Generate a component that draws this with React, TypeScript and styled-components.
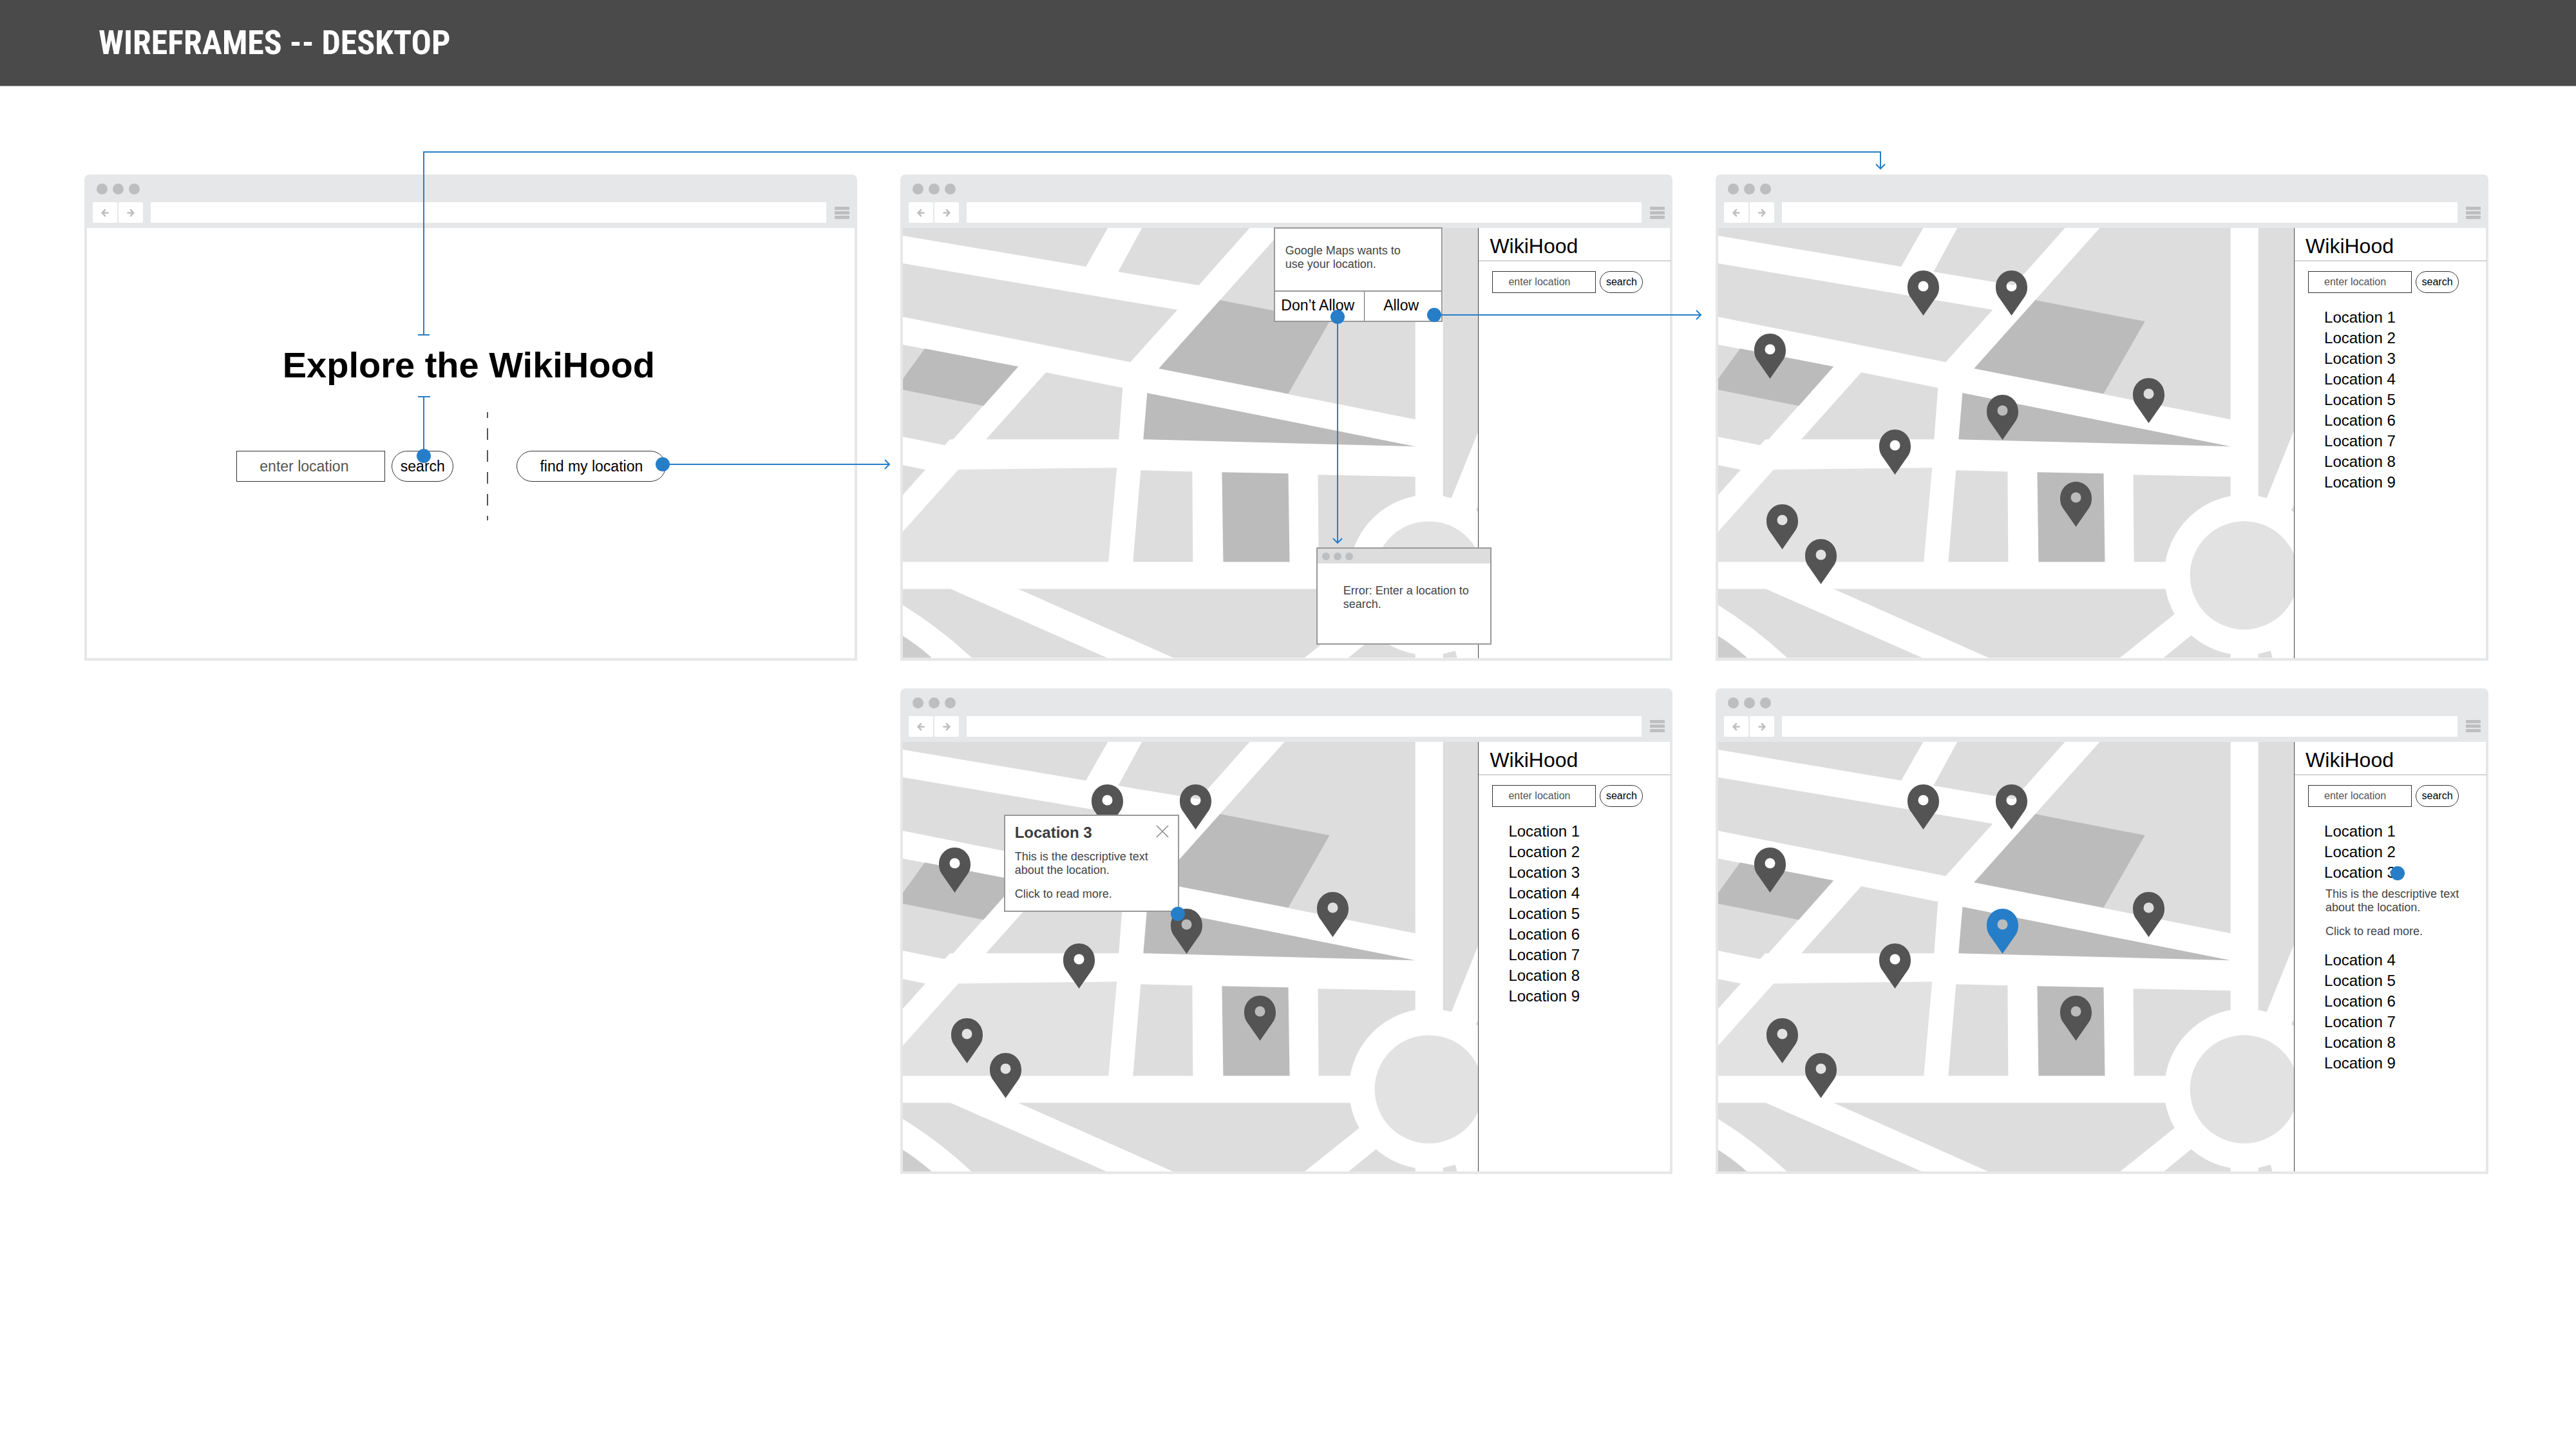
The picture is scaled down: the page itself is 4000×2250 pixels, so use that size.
import React from 'react';
import styled, { createGlobalStyle } from 'styled-components';

const BLUE = '#267ec8';
const CHROME = '#e6e7e8';
const SANS = '"Liberation Sans", Arial, Helvetica, sans-serif';

const GlobalStyle = createGlobalStyle`
  *, *::before, *::after { box-sizing: border-box; }
  body { margin: 0; background: #fff; font-family: ${SANS}; color: #000; }
  button, input { font-family: inherit; margin: 0; }
  h1, h2, h3, p, ul { margin: 0; padding: 0; }
  ul { list-style: none; }
  a { color: inherit; text-decoration: none; }
`;

/* ---------- page ---------- */

const Page = styled.div`
  position: relative;
  min-height: 100vh;
`;

const Header = styled.header`
  display: flex;
  align-items: center;
  height: 134px;
  padding: 0 153px;
  border-bottom: 1px solid #9a9a9a;
  background: #4a4a4a;
`;

const Title = styled.h1`
  color: #fff;
  font-family: "Liberation Sans Narrow", "Arial Narrow", "Roboto Condensed", ${SANS};
  font-size: 52px;
  line-height: 64px;
  font-weight: 700;
`;

const Board = styled.main`
  display: grid;
  grid-template-columns: repeat(3, minmax(0, 1fr));
  gap: 43px 67px;
  padding: 137px 136px 64px 131px;
`;

const Connectors = styled.svg`
  position: absolute;
  top: 0;
  left: 0;
  width: 100%;
  z-index: 5;
  pointer-events: none;
  fill: none;
  stroke: ${BLUE};
  stroke-width: 2;
`;

/* ---------- browser frame ---------- */

const Frame = styled.section<{ $column?: number }>`
  display: flex;
  flex-direction: column;
  grid-column: ${(p) => p.$column ?? 'auto'};
  border: 4px solid ${CHROME};
  border-top: 0;
  border-radius: 8px 8px 0 0;
  background: #fff;
`;

const Chrome = styled.div`
  display: flex;
  flex-direction: column;
  gap: 12px;
  padding: 14px 8px 8px 9px;
  border-radius: 4px 4px 0 0;
  background: ${CHROME};
`;

const Dots = styled.div<{ $size: number; $gap: number; $inset: number }>`
  display: flex;
  gap: ${(p) => p.$gap}px;
  padding-left: ${(p) => p.$inset}px;
  span {
    width: ${(p) => p.$size}px;
    height: ${(p) => p.$size}px;
    border-radius: 50%;
    background: #bcbec0;
  }
`;

const Toolbar = styled.div`
  display: flex;
  align-items: center;
`;

const NavGroup = styled.div`
  display: flex;
  gap: 2px;
  margin-right: 12px;
`;

const NavButton = styled.button`
  display: grid;
  place-items: center;
  width: 38px;
  height: 32px;
  padding: 0;
  border: 0;
  border-radius: 2px;
  background: #fff;
`;

const Address = styled.input`
  flex: 1;
  min-width: 0;
  height: 32px;
  padding: 0 12px;
  border: 0;
  border-radius: 1px;
  background: #fff;
  font-size: 18px;
`;

const MenuButton = styled.button`
  display: flex;
  flex-direction: column;
  gap: 2px;
  width: 23px;
  margin: 0 0 0 13px;
  padding: 0;
  border: 0;
  background: none;
  span {
    height: 5px;
    border-radius: 1px;
    background: #bcbec0;
  }
`;

const Body = styled.div`
  position: relative;
  flex: 1;
`;

const ArrowIcon = ({ d }: { d: string }) => (
  <svg width="14" height="14" viewBox="0 0 14 14" fill="none" stroke="#bcbec0" strokeWidth="2.6" strokeLinecap="round">
    <path d={d} />
  </svg>
);

const Browser = ({ column, children }: { column?: number; children: React.ReactNode }) => (
  <Frame $column={column}>
    <Chrome>
      <Dots $size={17} $gap={8} $inset={6}>
        <span /><span /><span />
      </Dots>
      <Toolbar>
        <NavGroup>
          <NavButton aria-label="Back">
            <ArrowIcon d="M11.500 7.500H3M7 2.800L2.700 7.500L7 12.200" />
          </NavButton>
          <NavButton aria-label="Forward">
            <ArrowIcon d="M2.500 7.500H11M7 2.800L11.300 7.500L7 12.200" />
          </NavButton>
        </NavGroup>
        <Address aria-label="Address" />
        <MenuButton aria-label="Menu">
          <span /><span /><span />
        </MenuButton>
      </Toolbar>
    </Chrome>
    <Body>{children}</Body>
  </Frame>
);

/* ---------- form controls ---------- */

const SearchForm = styled.form<{ $large?: boolean }>`
  display: flex;
  gap: ${(p) => (p.$large ? 10 : 6)}px;
`;

const Field = styled.input<{ $large?: boolean }>`
  width: ${(p) => (p.$large ? 231 : 161)}px;
  height: ${(p) => (p.$large ? 48 : 34)}px;
  padding: 0 0 0 ${(p) => (p.$large ? 35 : 24)}px;
  border: 1px solid #333;
  border-radius: 0;
  background: #fff;
  color: #555;
  font-size: ${(p) => (p.$large ? 23 : 16)}px;
  &::placeholder { color: #555; opacity: 1; }
`;

const Pill = styled.button<{ $large?: boolean; $width: number }>`
  width: ${(p) => p.$width}px;
  height: ${(p) => (p.$large ? 48 : 34)}px;
  padding: 0;
  border: 1px solid #333;
  border-radius: 24px;
  background: #fff;
  color: #000;
  font-size: ${(p) => (p.$large ? 23 : 16)}px;
  white-space: nowrap;
`;

const Search = ({ large }: { large?: boolean }) => (
  <SearchForm $large={large} onSubmit={(e) => e.preventDefault()}>
    <Field $large={large} placeholder="enter location" aria-label="Location" />
    <Pill $large={large} $width={large ? 96 : 67}>search</Pill>
  </SearchForm>
);

/* ---------- landing screen ---------- */

const Landing = styled.div`
  display: flex;
  flex-direction: column;
  align-items: center;
  gap: 41px;
  padding: 181px 6px 0 0;
`;

const Hero = styled.h2`
  font-size: 56px;
  line-height: 64px;
  font-weight: 700;
  white-space: nowrap;
`;

const Choices = styled.div`
  display: flex;
  align-items: center;
  padding-right: 54px;
`;

const Separator = styled.div`
  width: 2px;
  height: 168px;
  margin: 0 44px 0 52px;
  background: repeating-linear-gradient(#555 0 9px, transparent 9px 25px, #555 25px 34px);
`;

/* ---------- map ---------- */

const Split = styled.div`
  display: grid;
  grid-template-columns: 3fr 1fr;
  height: 100%;
`;

const MapArea = styled.div`
  position: relative;
  svg.map { display: block; width: 100%; height: 100%; }
`;

const PinButton = styled.button`
  position: absolute;
  width: 49px;
  height: 70px;
  margin-left: -25px;
  padding: 0;
  border: 0;
  background: none;
  svg { display: block; }
`;

const CityMap = () => (
  <svg className="map" viewBox="0 0 893 667" preserveAspectRatio="xMidYMid slice" fill="#ddd" aria-hidden="true">
    <path d="M0 0H318L284 60L0 12Z" />
    <path d="M371 0H538L459 89L334 68Z" />
    <path d="M592 0H795V297L397 218Z" />
    <path d="M0 55L426 127L353 208L0 138Z" />
    <path d="M0 181L179 215L78 328H73L65 337L0 324Z" />
    <path d="M222 224L341 248L335 328H129Z" />
    <path d="M838 0H893V315L851 419L838 416Z" />
    <path d="M0 368L35 375L0 414Z" />
    <path d="M369 376L449 378L450 518H357Z" />
    <path d="M644 383L795 386V416A125 125 0 0 0 694 518H645Z" />
    <path d="M179 560H694A125 125 0 0 0 708 599L623 667H420Z" />
    <path d="M0 560H74L317 667H107Q58 621 0 585Z" />
    <path d="M734 632A125 125 0 0 0 795 661V667H691Z" />
    <path d="M838 661L857 656L860 667H838Z" />
    <path d="M893 431L889 438L893 441Z" />
    <path fill="#cdcdcd" d="M0 633Q24 648 45 667H0Z" />
    <g fill="#e2e2e2">
      <path d="M86 375L332 372L319 518H0V471Z" />
      <circle cx="816" cy="539" r="84" />
    </g>
    <g fill="#bbb">
      <path d="M492 112L662 145L598 257L397 218Z" />
      <path d="M34 187L179 215L125 276L0 251V234Z" />
      <path d="M379 256L795 339L373 328Z" />
      <path d="M495 379L598 381L600 518H497Z" />
    </g>
  </svg>
);

const PINS = [
  { name: 'Location 1', x: 318, y: 66 },
  { name: 'Location 2', x: 455, y: 66 },
  { name: 'Location 4', x: 81, y: 164 },
  { name: 'Location 5', x: 668, y: 233 },
  { name: 'Location 3', x: 441, y: 259 },
  { name: 'Location 6', x: 274, y: 313 },
  { name: 'Location 7', x: 555, y: 394 },
  { name: 'Location 8', x: 100, y: 429 },
  { name: 'Location 9', x: 160, y: 483 },
];

const Pins = ({ active }: { active?: string }) => (
  <>
    {PINS.map((pin) => (
      <PinButton
        key={pin.name}
        aria-label={pin.name}
        style={{ left: `${(pin.x / 893) * 100}%`, top: `${(pin.y / 667) * 100}%` }}
      >
        <svg width="49" height="70" viewBox="0 0 49 70" fill={pin.name === active ? BLUE : '#545454'}>
          <path
            fillRule="evenodd"
            d="M24.5 0C38 0 49 11 49 26C49 33 47 38 44 42L24.5 70L5 42C2 38 0 33 0 26C0 11 11 0 24.5 0ZM24.5 16.500a8 8 0 1 0 0 16a8 8 0 1 0 0-16Z"
          />
        </svg>
      </PinButton>
    ))}
  </>
);

/* ---------- sidebar ---------- */

const Sidebar = styled.aside`
  border-left: 1px solid #444;
  background: #fff;
`;

const Brand = styled.h2`
  height: 52px;
  margin-right: -2px;
  padding: 10px 0 0 17px;
  border-bottom: 2px solid #d4d4d4;
  font-size: 32px;
  line-height: 36px;
  font-weight: 400;
`;

const SideContent = styled.div`
  display: flex;
  flex-direction: column;
  gap: 22px;
  padding: 15px 0 0 21px;
`;

const List = styled.ul`
  padding-left: 25px;
  font-size: 24px;
  line-height: 32px;
`;

const Detail = styled.div<{ $inline?: boolean }>`
  display: flex;
  flex-direction: column;
  gap: 16px;
  padding: ${(p) => (p.$inline ? '7px 0 18px 2px' : '0')};
  color: #444;
  font-size: 18px;
  line-height: 21px;
  white-space: nowrap;
`;

const Description = ({ inline }: { inline?: boolean }) => (
  <Detail $inline={inline}>
    <p>This is the descriptive text<br />about the location.</p>
    <a href="#more">Click to read more.</a>
  </Detail>
);

const LocationSidebar = ({ list, open }: { list?: boolean; open?: number }) => (
  <Sidebar>
    <Brand>WikiHood</Brand>
    <SideContent>
      <Search />
      {list && (
        <List>
          {[1, 2, 3, 4, 5, 6, 7, 8, 9].map((n) => (
            <li key={n}>
              <a href={`#location-${n}`}>Location {n}</a>
              {open === n && <Description inline />}
            </li>
          ))}
        </List>
      )}
    </SideContent>
  </Sidebar>
);

/* ---------- floating panels ---------- */

const Panel = styled.div<{ $x: number; $y: number; $width: number }>`
  position: absolute;
  left: ${(p) => p.$x}px;
  top: ${(p) => p.$y}px;
  width: ${(p) => p.$width}px;
  border: 2px solid #999;
  background: #fff;
  z-index: 2;
`;

const PanelText = styled.p<{ $pad: string }>`
  padding: ${(p) => p.$pad};
  color: #444;
  font-size: 18px;
  line-height: 21px;
  white-space: nowrap;
`;

const Actions = styled.div`
  display: grid;
  grid-template-columns: 138px 1fr;
  border-top: 2px solid #999;
  button {
    height: 45px;
    padding: 0 5px 2px 0;
    border: 0;
    background: none;
    color: #000;
    font-size: 23px;
    white-space: nowrap;
  }
  button + button { border-left: 1px solid #666; }
`;

const PanelBar = styled.div`
  display: flex;
  align-items: center;
  height: 23px;
  background: #ddd;
`;

const Popup = styled(Panel)`
  display: flex;
  flex-direction: column;
  gap: 15px;
  padding: 14px 14px 15px 15px;
`;

const PopupHead = styled.div`
  display: flex;
  justify-content: space-between;
  height: 24px;
`;

const PopupTitle = styled.h3`
  color: #3c3c3c;
  font-size: 24px;
  line-height: 24px;
  font-weight: 700;
`;

const CloseButton = styled.button`
  width: 20px;
  height: 20px;
  padding: 0;
  border: 0;
  background: none;
  svg { display: block; }
`;

export default function App() {
  return (
    <Page>
      <GlobalStyle />
      <Header>
        <Title>WIREFRAMES -- DESKTOP</Title>
      </Header>

      <Board>
        <Browser>
          <Landing>
            <Hero>Explore the WikiHood</Hero>
            <Choices>
              <Search large />
              <Separator />
              <Pill $large $width={232}>find my location</Pill>
            </Choices>
          </Landing>
        </Browser>

        <Browser>
          <Split>
            <MapArea>
              <CityMap />
            </MapArea>
            <LocationSidebar />
          </Split>
          <Panel $x={576} $y={-1} $width={262} role="dialog" aria-label="Location permission">
            <PanelText $pad="24px 0 30px 16px">Google Maps wants to<br />use your location.</PanelText>
            <Actions>
              <button>Don’t Allow</button>
              <button>Allow</button>
            </Actions>
          </Panel>
          <Panel $x={642} $y={496} $width={272} role="alertdialog" aria-label="Error">
            <PanelBar>
              <Dots $size={12} $gap={6} $inset={7}>
                <span /><span /><span />
              </Dots>
            </PanelBar>
            <PanelText $pad="32px 0 50px 40px">Error: Enter a location to<br />search.</PanelText>
          </Panel>
        </Browser>

        <Browser>
          <Split>
            <MapArea>
              <CityMap />
              <Pins />
            </MapArea>
            <LocationSidebar list />
          </Split>
        </Browser>

        <Browser column={2}>
          <Split>
            <MapArea>
              <CityMap />
              <Pins />
            </MapArea>
            <LocationSidebar list />
          </Split>
          <Popup $x={157} $y={113} $width={272} role="dialog" aria-label="Location 3">
            <PopupHead>
              <PopupTitle>Location 3</PopupTitle>
              <CloseButton aria-label="Close">
                <svg width="20" height="20" viewBox="0 0 20 20" stroke="#888" strokeWidth="1.5">
                  <path d="M1 1l18 18M19 1L1 19" />
                </svg>
              </CloseButton>
            </PopupHead>
            <Description />
          </Popup>
        </Browser>

        <Browser column={3}>
          <Split>
            <MapArea>
              <CityMap />
              <Pins active="Location 3" />
            </MapArea>
            <LocationSidebar list open={3} />
          </Split>
        </Browser>
      </Board>

      <Connectors viewBox="0 0 4000 2250" aria-hidden="true">
        <path d="M649 520H667M658 520V236H2920V261M2913 255l7 7l7-7" />
        <path d="M649 616H668M658 616V708" />
        <path d="M1029 721H1380M1374 714l7 7l-7 7" />
        <path d="M2077 492V842M2070 836l7 7l7-7" />
        <path d="M2227 489H2640M2634 482l7 7l-7 7" />
        <g fill={BLUE} stroke="none">
          <circle cx="658" cy="708" r="11" />
          <circle cx="1029" cy="721" r="11" />
          <circle cx="2077" cy="492" r="11" />
          <circle cx="2227" cy="489" r="11" />
          <circle cx="1829" cy="1419" r="11" />
          <circle cx="3723" cy="1356" r="11" />
        </g>
      </Connectors>
    </Page>
  );
}
